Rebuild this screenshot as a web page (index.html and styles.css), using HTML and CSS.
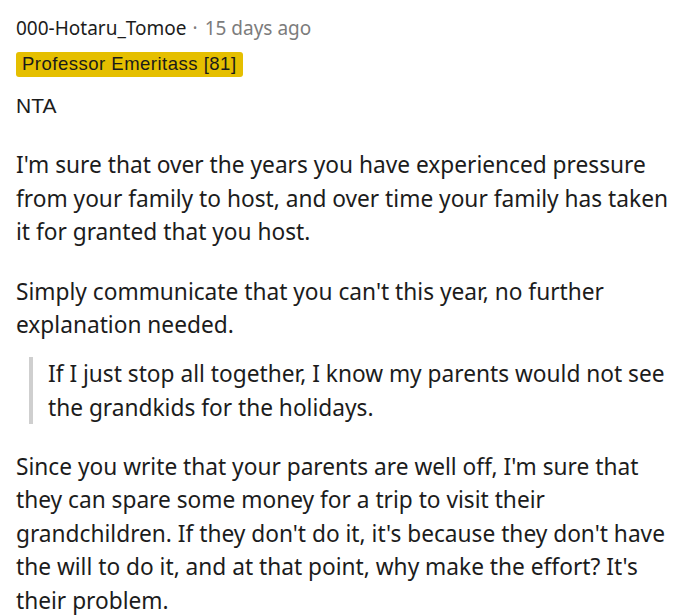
FILE: index.html
```html
<!DOCTYPE html>
<html>
<head>
<meta charset="utf-8">
<link rel="stylesheet" href="styles.css">
</head>
<body>
<div class="comment">
  <div class="meta">
    <span class="author">000-Hotaru_Tomoe</span>
    <span class="dot">·</span>
    <span class="time">15 days ago</span>
  </div>
  <div class="flair-row"><span class="flair">Professor Emeritass [81]</span></div>
  <div class="body">
    <p class="nta">NTA</p>
    <p>I'm sure that over the years you have experienced pressure from your family to host, and over time your family has taken it for granted that you host.</p>
    <p class="tight">Simply communicate that you can't this year, no further explanation needed.</p>
    <blockquote><p>If I just stop all together, I know my parents would not see the grandkids for the holidays.</p></blockquote>
    <p>Since you write that your parents are well off, I'm sure that they can spare some money for a trip to visit their grandchildren. If they don't do it, it's because they don't have the will to do it, and at that point, why make the effort? It's their problem.</p>
  </div>
</div>
</body>
</html>
```

FILE: styles.css
```css
html, body {
  margin: 0;
  padding: 0;
  background: #ffffff;
}
.comment {
  padding: 16px 16px 0 16px;
  color: #1c1c1c;
}
.meta {
  font-family: "Noto Sans", sans-serif;
  font-size: 19px;
  line-height: 24px;
  display: flex;
  align-items: baseline;
  gap: 6px;
}
.author {
  color: #1c1c1c;
}
.dot, .time {
  color: #7c7c7c;
}
.time {
  margin-left: 1px;
}
.flair-row {
  margin-top: 12px;
  display: flex;
}
.flair {
  font-family: "Liberation Sans", Arial, sans-serif;
  font-size: 18.5px;
  letter-spacing: 0.5px;
  line-height: 23px;
  padding: 0 6px 2px 6px;
  background: #e5bf00;
  color: #1a1a1a;
  border-radius: 3px;
}
.body {
  font-family: "Noto Sans", sans-serif;
  font-size: 22.7px;
  line-height: 33.5px;
  margin-top: 12px;
}
.body p {
  margin: 0 0 26px 0;
}
.body p.nta {
  font-family: "Liberation Sans", Arial, sans-serif;
  font-size: 21px;
  margin-bottom: 25.5px;
}
.body p.tight {
  margin-bottom: 15.5px;
}
blockquote {
  margin: 0 0 25.5px 13px;
  padding-left: 15px;
  border-left: 4px solid #cfcfcf;
}
blockquote p {
  margin: 0 !important;
}
```
